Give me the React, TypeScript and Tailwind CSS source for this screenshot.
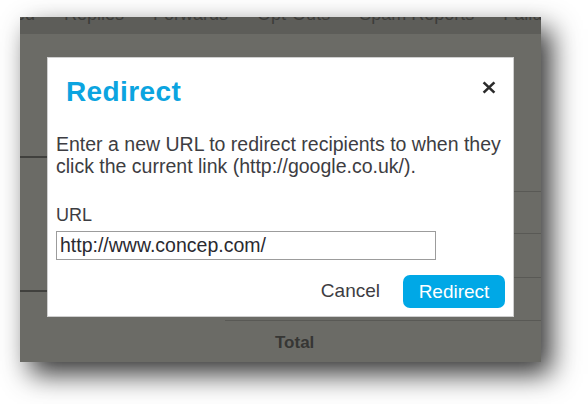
import React from "react";

export default function App() {
  return (
    <div className="w-[588px] h-[404px] bg-white overflow-hidden font-['Liberation_Sans',Arial,sans-serif]">
      <div className="relative ml-[20px] mt-[17px] w-[521px] h-[345px] bg-[#6b6b66] shadow-[10px_12px_26px_rgba(0,0,0,0.8)] flex flex-col">
        {/* cropped header strip */}
        <div className="h-[17px] bg-[#5d5d59] overflow-hidden shrink-0">
          <div className="flex gap-[29px] ml-[-49px] mt-[-12px] text-[18px] leading-[18px] text-[#3c3c39] whitespace-nowrap">
            <span>Opened</span>
            <span>Replies</span>
            <span>Forwards</span>
            <span>Opt-Outs</span>
            <span>Spam Reports</span>
            <span>Failures</span>
          </div>
        </div>
        {/* table behind overlay */}
        <div className="flex flex-1">
          <div className="w-[205px] flex flex-col">
            <div className="h-[124px] border-b-2 border-[#40403d]" />
            <div className="h-[134px] border-b-2 border-[#40403d]" />
            <div className="flex-1" />
          </div>
          <div className="flex-1 flex flex-col">
            <div className="h-[158px] border-b border-[#595955]" />
            <div className="h-[42px] border-b border-[#595955]" />
            <div className="h-[44px] border-b border-[#595955]" />
            <div className="h-[43px] border-b border-[#595955]" />
            <div className="flex-1 pl-[50px] pt-[12px] text-[17px] leading-[20px] font-bold text-[#363634]">
              Total
            </div>
          </div>
        </div>

        {/* modal */}
        <div className="absolute left-[27px] top-[40px] w-[467px] bg-white border border-[#cfcfcf] pt-[18px] px-[8px] pb-[8px]">
          <div className="flex justify-between items-start h-[32px]">
            <h2 className="pl-[10px] text-[28px] leading-[32px] font-bold tracking-[0.4px] text-[#0ba4e0]">
              Redirect
            </h2>
            <svg width="14" height="13" viewBox="0 0 14 13" className="mt-[5px] mr-[9px]">
              <path d="M1.6 1.4 L12.4 11.6 M12.4 1.4 L1.6 11.6" stroke="#2b2b2b" strokeWidth="2.6" strokeLinecap="butt" fill="none" />
            </svg>
          </div>
          <p className="mt-[25px] text-[19.5px] leading-[22px] text-[#3d3d42]">
            Enter a new URL to redirect recipients to when they click the current link (http://google.co.uk/).
          </p>
          <div className="mt-[27px] text-[18px] leading-[22px] text-[#3d3d42]">URL</div>
          <input
            readOnly
            value="http://www.concep.com/"
            className="mt-[5px] block w-[380px] h-[29px] border border-[#9c9c9c] px-[3px] text-[19.5px] text-[#2a2a30] outline-none bg-white font-['Liberation_Sans',Arial,sans-serif]"
          />
          <div className="mt-[15px] flex justify-end items-center gap-[23px]">
            <span className="text-[19px] text-[#3d3d42]">Cancel</span>
            <button className="w-[102px] h-[33px] rounded-[7px] bg-[#00a8e6] text-white text-[19px] leading-[22px] font-['Liberation_Sans',Arial,sans-serif]">
              Redirect
            </button>
          </div>
        </div>
      </div>
    </div>
  );
}
